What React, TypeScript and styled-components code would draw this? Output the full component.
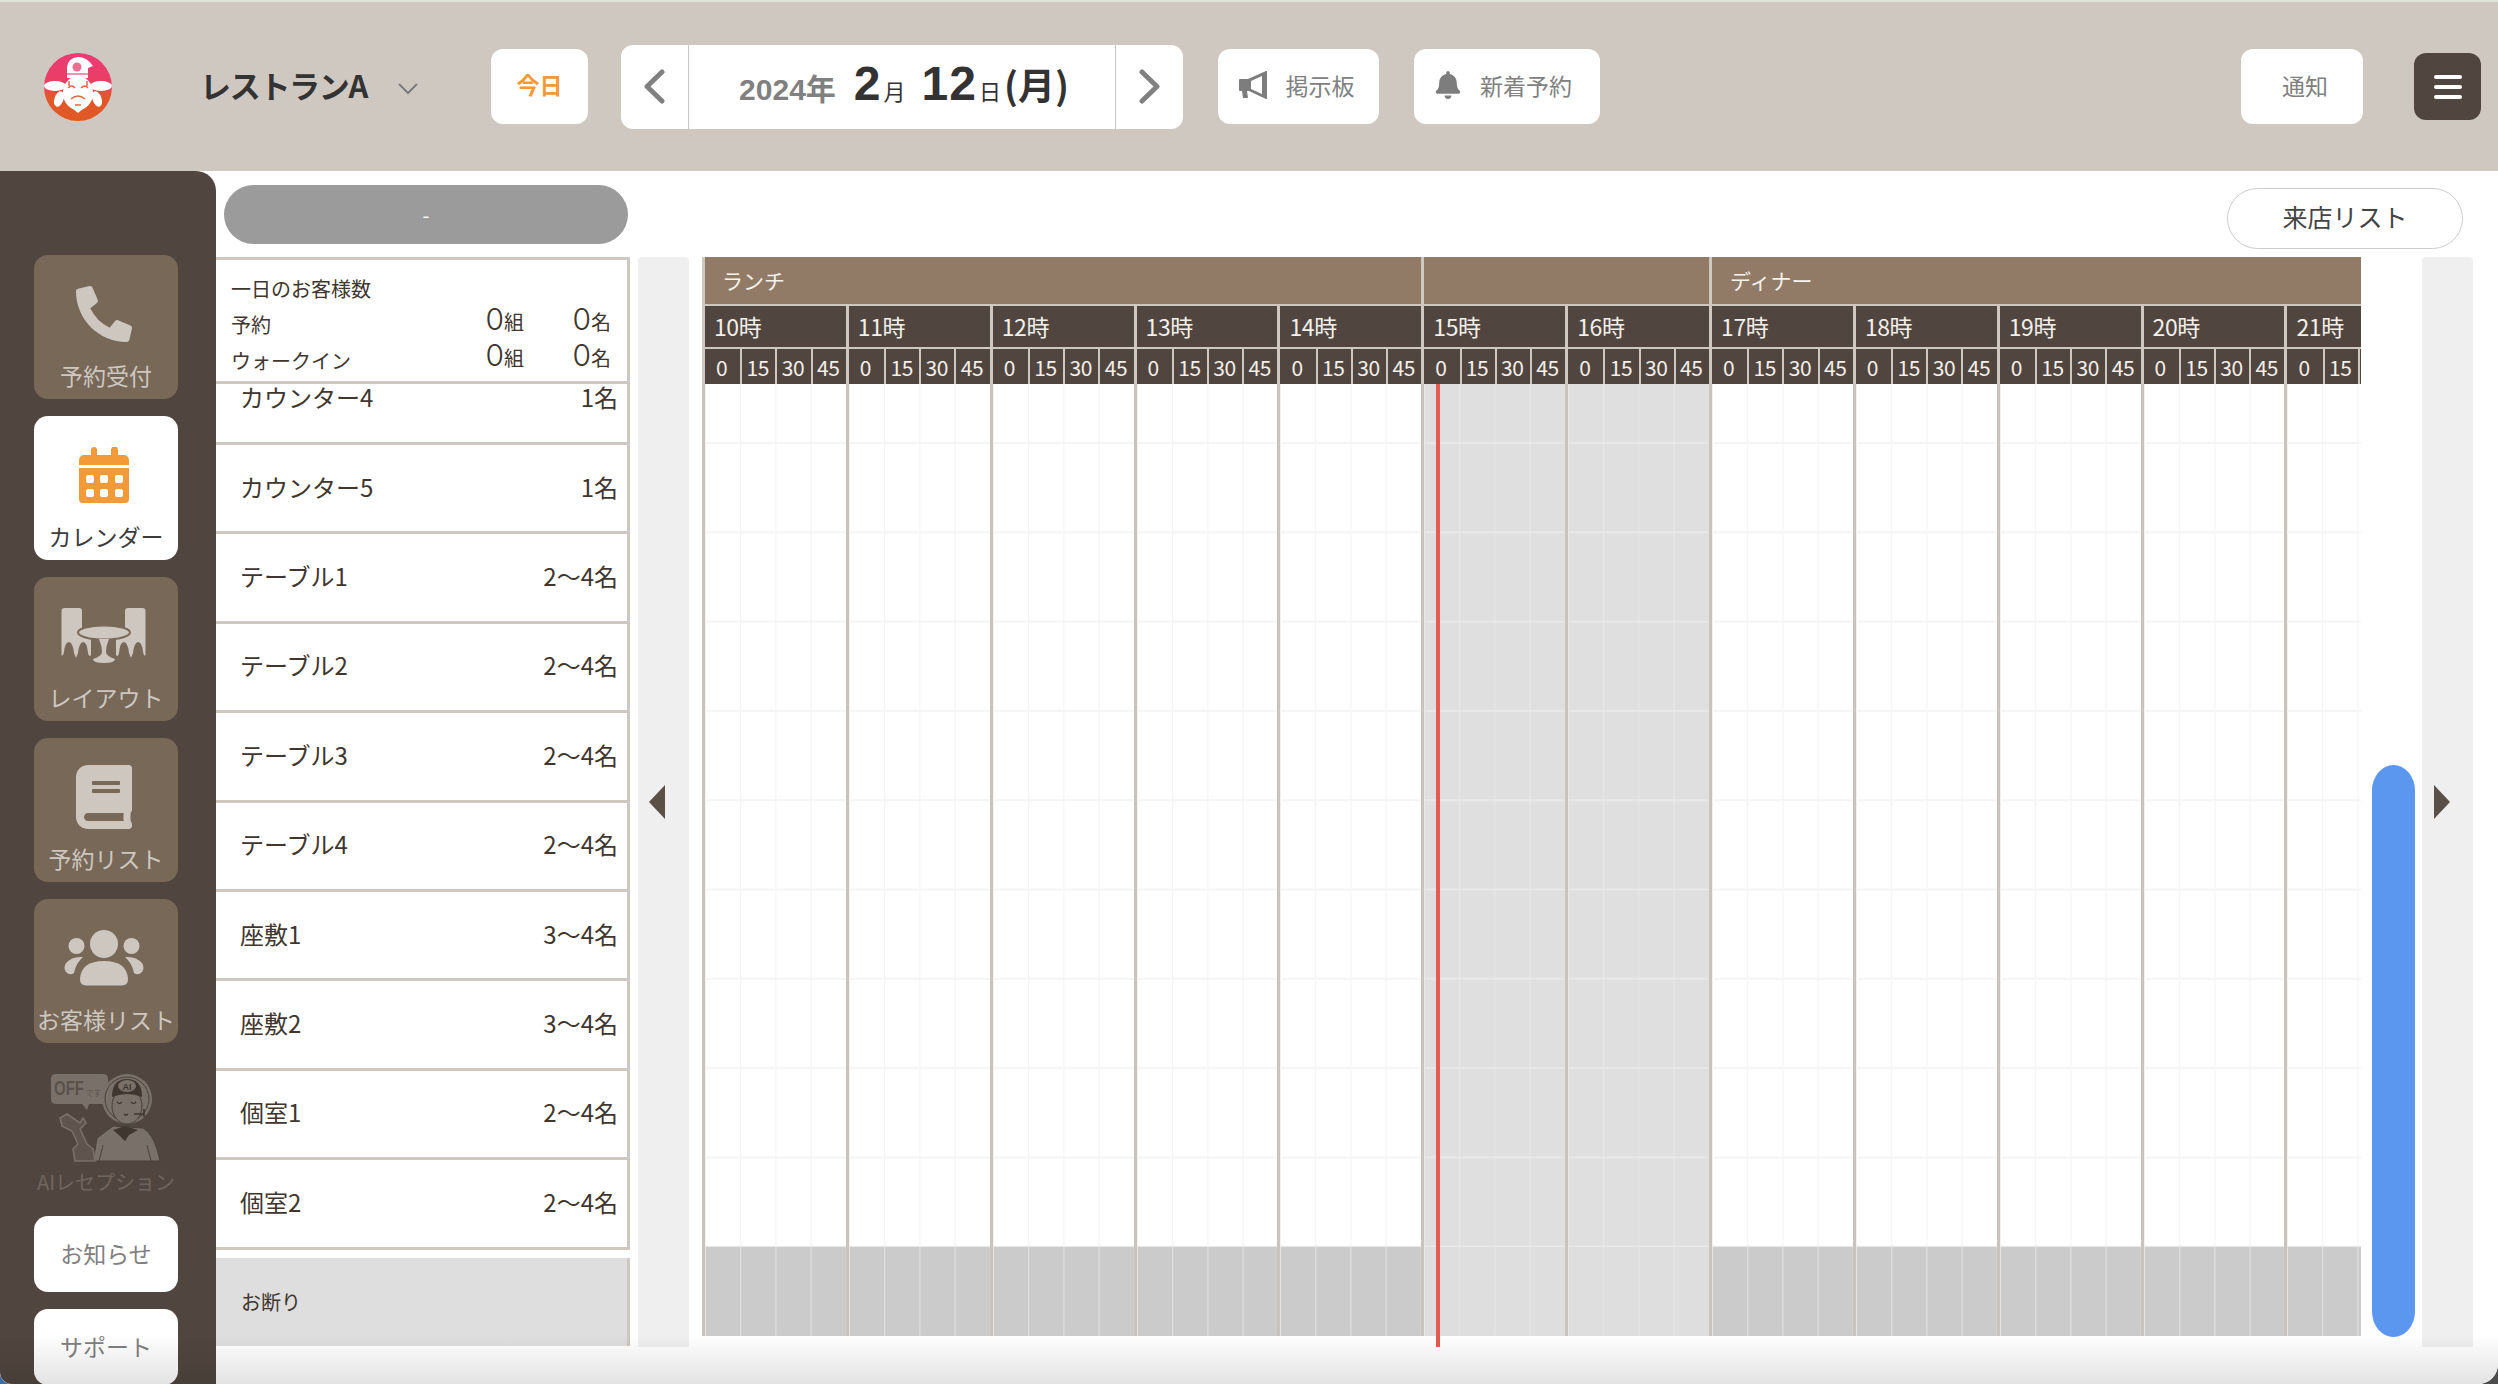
import React from 'react'
import styled, { createGlobalStyle } from 'styled-components'
import { FaPhoneAlt, FaBook, FaBell } from 'react-icons/fa'

const FONT = `'Noto Sans CJK JP', 'Noto Sans', sans-serif`
const HOUR_WIDTH = 143.86
const hours = [10, 11, 12, 13, 14, 15, 16, 17, 18, 19, 20, 21]
const quarters = [0, 15, 30, 45]
// the last hour is cut by the edge of the chart
const lastQuarters = [0, 15, null]
const seats = [
	{ name: 'カウンター5', size: '1名' },
	{ name: 'テーブル1', size: '2〜4名' },
	{ name: 'テーブル2', size: '2〜4名' },
	{ name: 'テーブル3', size: '2〜4名' },
	{ name: 'テーブル4', size: '2〜4名' },
	{ name: '座敷1', size: '3〜4名' },
	{ name: '座敷2', size: '3〜4名' },
	{ name: '個室1', size: '2〜4名' },
	{ name: '個室2', size: '2〜4名' },
]

const GlobalStyle = createGlobalStyle`
	html, body {
		margin: 0;
		padding: 0;
		width: 2498px;
		height: 1384px;
		overflow: hidden;
		background: linear-gradient(to right, #3a6ea8 50%, #4d4d4d 50%);
	}
	* {
		box-sizing: border-box;
	}
`

function Logo() {
	return (
		<LogoBox viewBox='0 0 68 68'>
			<defs>
				<linearGradient id='logoFill' x1='0' y1='0' x2='0' y2='1'>
					<stop offset='0' stopColor='#ec3a74' />
					<stop offset='0.5' stopColor='#ea3f62' />
					<stop offset='0.62' stopColor='#e2562c' />
					<stop offset='1' stopColor='#e05a24' />
				</linearGradient>
			</defs>
			<circle cx='34' cy='34' r='34' fill='url(#logoFill)' />
			<path d='M23 25 V14 Q24 5 34 4 Q43 4 49 13 L44 15 V25 Z' fill='#fff' />
			<circle cx='33' cy='14' r='4.5' fill='#ef6f93' />
			<path d='M23 21 H44' stroke='#ef6f93' strokeWidth='1.4' />
			<ellipse cx='11' cy='33' rx='11' ry='5' fill='#fff' />
			<ellipse cx='57' cy='33' rx='11' ry='5' fill='#fff' />
			<ellipse cx='15' cy='46' rx='4.5' ry='8' fill='#fff' transform='rotate(20 15 46)' />
			<ellipse cx='53' cy='46' rx='4.5' ry='8' fill='#fff' transform='rotate(-20 53 46)' />
			<ellipse cx='34' cy='40' rx='15' ry='17' fill='#fff' />
			<path d='M34 60 l-6 -5 h12 Z' fill='#fff' />
			<path
				d='M24 35 q4 -4 7 0 M37 35 q4 -4 7 0 M27 46 q7 -6 14 0 M25 28 v5 M43 28 v5 M31 52 h6'
				fill='none'
				stroke='#e2653f'
				strokeWidth='1.5'
			/>
		</LogoBox>
	)
}

function CalendarIcon() {
	return (
		<svg width='50' height='56' viewBox='0 0 50 56'>
			<path
				d='M12 8 V3 a3 3 0 0 1 6 0 V8 H32 V3 a3.5 3.5 0 0 1 7 0 V8 H45 a5 5 0 0 1 5 5 V18 H0 V13 a5 5 0 0 1 5 -5 Z'
				fill='#f29a38'
			/>
			<path
				fillRule='evenodd'
				d='M0 21 H50 V52 a4 4 0 0 1 -4 4 H4 a4 4 0 0 1 -4 -4 Z M9 28 a2 2 0 0 0 -2 2 v4 a2 2 0 0 0 2 2 h4 a2 2 0 0 0 2 -2 v-4 a2 2 0 0 0 -2 -2 Z M23 28 a2 2 0 0 0 -2 2 v4 a2 2 0 0 0 2 2 h4 a2 2 0 0 0 2 -2 v-4 a2 2 0 0 0 -2 -2 Z M38 28 a2 2 0 0 0 -2 2 v4 a2 2 0 0 0 2 2 h4 a2 2 0 0 0 2 -2 v-4 a2 2 0 0 0 -2 -2 Z M9 42 a2 2 0 0 0 -2 2 v4 a2 2 0 0 0 2 2 h4 a2 2 0 0 0 2 -2 v-4 a2 2 0 0 0 -2 -2 Z M23 42 a2 2 0 0 0 -2 2 v4 a2 2 0 0 0 2 2 h4 a2 2 0 0 0 2 -2 v-4 a2 2 0 0 0 -2 -2 Z M38 42 a2 2 0 0 0 -2 2 v4 a2 2 0 0 0 2 2 h4 a2 2 0 0 0 2 -2 v-4 a2 2 0 0 0 -2 -2 Z'
				fill='#f29a38'
			/>
		</svg>
	)
}

const CHAIR =
	'M0.5 3 Q0.5 0 3.5 0 H18 Q21 0 21 3 V23 H28 Q30 24 30 27 V47 Q28 50 27 45 Q26 34 22 34 Q18 35 17 45 L15 50 L13 45 Q12 35 8 34 Q4 34 3 44 Q2 49 0.5 47 Z'

function TableIcon() {
	return (
		<svg width='85' height='55' viewBox='0 0 85 55'>
			<path d={CHAIR} fill='#cdc7c0' />
			<path d={CHAIR} fill='#cdc7c0' transform='matrix(-1 0 0 1 85 0)' />
			<ellipse cx='43' cy='24.5' rx='26' ry='7' fill='#cdc7c0' stroke='#786858' strokeWidth='2' />
			<path
				d='M38 31 H48 Q45 38 45 44 Q45 48 54 51 Q54 55 43 55 Q32 55 32 51 Q41 48 41 44 Q41 38 38 31 Z'
				fill='#cdc7c0'
			/>
		</svg>
	)
}

function PeopleIcon() {
	return (
		<svg width='80' height='56' viewBox='0 0 80 56'>
			<circle cx='40' cy='14' r='14' fill='#cdc7c0' />
			<circle cx='12.5' cy='16' r='8' fill='#cdc7c0' />
			<circle cx='67.5' cy='16' r='8' fill='#cdc7c0' />
			<path d='M16 49 Q17 31 40 31 Q63 31 64 49 Q64 55.5 58 55.5 H22 Q16 55.5 16 49 Z' fill='#cdc7c0' />
			<path d='M19 27 Q8 26 2 33 Q-1 38 2 42 Q6 46 10 43 Q12 33 19 27 Z' fill='#cdc7c0' />
			<path d='M61 27 Q72 26 78 33 Q81 38 78 42 Q74 46 70 43 Q68 33 61 27 Z' fill='#cdc7c0' />
		</svg>
	)
}

function ReceptionArt() {
	return (
		<svg width='110' height='90' viewBox='0 0 110 90'>
			<path d='M5 1 H52 Q57 1 57 6 V26 Q57 31 52 31 H38 L36 37 L31 31 H5 Q0 31 0 26 V6 Q0 1 5 1 Z' fill='#7a706a' />
			<ArtText x='3' y='16.5' fontSize='15' fontWeight='700' fill='#5b514a' transform='scale(1 1.35)'>
				OFF
			</ArtText>
			<ArtText x='35' y='23' fontSize='7.5' fill='#5b514a'>
				です
			</ArtText>
			<path d='M46 65 L62 53 L92 55 Q104 62 109 88 H42 Z' fill='#7a706a' stroke='#4a403a' strokeWidth='1' />
			<path
				d='M9 45 L16 41 L29 50 L32 45 L35 50 L29 56 L36 71 L42 76 L44 88 L24 88 L22 76 L27 71 L21 58 L11 53 Z'
				fill='#5f554e'
				stroke='#7a706a'
				strokeWidth='1.6'
				strokeLinejoin='round'
			/>
			<circle cx='76' cy='26' r='25' fill='#7a706a' />
			<circle cx='76' cy='26' r='22' fill='#7a706a' stroke='#4a403a' strokeWidth='1' />
			<ellipse cx='76' cy='33' rx='15' ry='18' fill='#7a706a' stroke='#4a403a' strokeWidth='1' />
			<path d='M61 24 Q61 6 76 6 Q91 6 91 24 Q76 18 61 24 Z' fill='#3f3630' />
			<ellipse cx='76' cy='13' rx='9' ry='6' fill='#7a706a' />
			<ArtText x='76' y='16.5' fontSize='9' fontWeight='700' textAnchor='middle' fill='#3f3630'>
				AI
			</ArtText>
			<path d='M66 29 q2.5 3 5 0 M80 29 q2.5 3 5 0 M73 41 q2 2 4 0' fill='none' stroke='#3f3630' strokeWidth='1.2' />
			<path d='M83 41 H93 M93 36 V44' stroke='#3f3630' strokeWidth='1.6' fill='none' />
			<path d='M62 57 L74 53 L87 57 L78 62 L74 68 L68 62 Z' fill='#3f3630' />
			<path d='M52 72 L48 88 M96 72 L100 88' stroke='#4a403a' strokeWidth='1' fill='none' />
		</svg>
	)
}

function MegaphoneIcon() {
	return (
		<svg width='28' height='28' viewBox='0 0 28 28'>
			<path
				fillRule='evenodd'
				d='M0 9 Q0 8 1 8 H9 L27 0 H28 V28 H27 L10 20 H8 L9 27 H4 L3 20 H1 Q0 20 0 19 Z M12 10 V18 L23 23 V5 Z'
				fill='#7d7d7d'
			/>
		</svg>
	)
}

function Chevron({ flip }: { flip?: boolean }) {
	return (
		<svg width='21' height='35' viewBox='0 0 21 35'>
			<path
				d={flip ? 'M3 3 L18 17.5 L3 32' : 'M18 3 L3 17.5 L18 32'}
				fill='none'
				stroke='#808080'
				strokeWidth='5'
				strokeLinecap='round'
				strokeLinejoin='round'
			/>
		</svg>
	)
}

function SmallChevron() {
	return (
		<SmallChevronBox width='20' height='12' viewBox='0 0 20 12'>
			<path d='M1 1 L10 10 L19 1' fill='none' stroke='#7d7d7d' strokeWidth='2' />
		</SmallChevronBox>
	)
}

function App() {
	return (
		<Page>
			<GlobalStyle />
			<Header>
				<Logo />
				<ShopName>レストランA</ShopName>
				<SmallChevron />
				<TodayButton>今日</TodayButton>
				<DatePicker>
					<DateArrow $side='left'>
						<Chevron />
					</DateArrow>
					<DateText>
						<YearText>2024年</YearText>
						<BigNumber>2</BigNumber>
						<SmallUnit>月</SmallUnit>
						<BigNumber $gap>12</BigNumber>
						<SmallUnit>日</SmallUnit>
						<WeekText>(月)</WeekText>
					</DateText>
					<DateArrow $side='right'>
						<Chevron flip />
					</DateArrow>
				</DatePicker>
				<HeaderButton $width={161} $left={35} $gap={19} $padRight={4}>
					<MegaphoneIcon />
					<span>掲示板</span>
				</HeaderButton>
				<HeaderButton $width={186} $left={35} $gap={18} $padRight={8}>
					<FaBell size={28} color='#7d7d7d' />
					<span>新着予約</span>
				</HeaderButton>
				<HeaderSpacer />
				<HeaderButton $width={122} $left={0} $gap={0} $padLeft={6}>
					<span>通知</span>
				</HeaderButton>
				<MenuButton>
					<MenuBar />
					<MenuBar />
					<MenuBar />
				</MenuButton>
			</Header>
			<Body>
				<Sidebar>
					<NavButton>
						<NavIcon>
							<FaPhoneAlt size={56} color='#cdc7c0' />
						</NavIcon>
						<NavLabel>予約受付</NavLabel>
					</NavButton>
					<NavButton $active>
						<NavIcon>
							<CalendarIcon />
						</NavIcon>
						<NavLabel>カレンダー</NavLabel>
					</NavButton>
					<NavButton>
						<NavIcon>
							<TableIcon />
						</NavIcon>
						<NavLabel>レイアウト</NavLabel>
					</NavButton>
					<NavButton>
						<NavIcon>
							<FaBook size={64} color='#cdc7c0' />
						</NavIcon>
						<NavLabel>予約リスト</NavLabel>
					</NavButton>
					<NavButton>
						<NavIcon>
							<PeopleIcon />
						</NavIcon>
						<NavLabel>お客様リスト</NavLabel>
					</NavButton>
					<ReceptionBlock>
						<ReceptionArt />
						<ReceptionLabel>AIレセプション</ReceptionLabel>
					</ReceptionBlock>
					<SideButton>お知らせ</SideButton>
					<SideButton>サポート</SideButton>
				</Sidebar>
				<Main>
					<Toolbar>
						<GrayPill>-</GrayPill>
						<VisitButton>来店リスト</VisitButton>
					</Toolbar>
					<Board>
						<SeatList>
							<Summary>
								<SummaryTitle>一日のお客様数</SummaryTitle>
								<SummaryRow>
									<SummaryName>予約</SummaryName>
									<SummaryCount $width={66}>
										<Zero>0</Zero>組
									</SummaryCount>
									<SummaryCount $width={87}>
										<Zero>0</Zero>名
									</SummaryCount>
								</SummaryRow>
								<SummaryRow>
									<SummaryName>ウォークイン</SummaryName>
									<SummaryCount $width={66}>
										<Zero>0</Zero>組
									</SummaryCount>
									<SummaryCount $width={87}>
										<Zero>0</Zero>名
									</SummaryCount>
								</SummaryRow>
							</Summary>
							<SeatRow $clipped>
								<span>カウンター4</span>
								<span>1名</span>
							</SeatRow>
							{seats.map((seat) => (
								<SeatRow key={seat.name}>
									<span>{seat.name}</span>
									<span>{seat.size}</span>
								</SeatRow>
							))}
							<RefuseRow>お断り</RefuseRow>
						</SeatList>
						<SidePanel $pad='right'>
							<TriangleLeft />
						</SidePanel>
						<Timeline>
							<BandRow>
								<Band $hours={5}>ランチ</Band>
								<Band $hours={2} />
								<Band $hours={5}>ディナー</Band>
							</BandRow>
							<HourRow>
								{hours.map((h) => (
									<HourCell key={h}>{h}時</HourCell>
								))}
							</HourRow>
							<MinuteRow>
								{hours.map((h) => (
									<MinuteGroup key={h}>
										{(h === 21 ? lastQuarters : quarters).map((q, i) => (
											<MinuteCell key={i}>{q}</MinuteCell>
										))}
									</MinuteGroup>
								))}
							</MinuteRow>
							<GridBody>
								{hours.map((h) => (
									<HourColumn key={h}>
										<SlotArea $off={h === 15 || h === 16} />
										<RefuseArea $off={h === 15 || h === 16} />
									</HourColumn>
								))}
								<NowLine />
							</GridBody>
						</Timeline>
						<ScrollTrack>
							<ScrollThumb />
						</ScrollTrack>
						<SidePanel $pad='left'>
							<TriangleRight />
						</SidePanel>
					</Board>
				</Main>
			</Body>
			<BottomShade />
		</Page>
	)
}

const Page = styled.div`
	position: relative;
	width: 2498px;
	height: 1384px;
	overflow: hidden;
	display: flex;
	flex-direction: column;
	border-radius: 0 0 20px 12px;
	border-top: 2px solid #dfe3d8;
	background: #fff;
	font-family: ${FONT};
`
const Header = styled.header`
	flex: 0 0 169px;
	display: flex;
	align-items: center;
	padding: 0 17px 0 44px;
	background: #cfc8c1;
`
const LogoBox = styled.svg`
	width: 68px;
	height: 68px;
	flex: none;
`
const ShopName = styled.div`
	margin: 0 0 5px 88px;
	font-size: 31px;
	font-weight: 700;
	letter-spacing: -1.3px;
	color: #333;
`
const SmallChevronBox = styled.svg`
	margin: 4px 0 0 31px;
	flex: none;
`
const TodayButton = styled.button`
	margin-left: 73px;
	width: 97px;
	height: 75px;
	padding: 0 0 5px;
	border: none;
	border-radius: 12px;
	background: #fff;
	font-family: ${FONT};
	font-size: 23px;
	font-weight: 700;
	color: #f29a38;
`
const DatePicker = styled.div`
	margin-left: 33px;
	width: 562px;
	height: 84px;
	display: flex;
	border-radius: 12px;
	background: #fff;
	overflow: hidden;
`
const DateArrow = styled.div<{ $side: 'left' | 'right' }>`
	flex: 0 0 68px;
	display: flex;
	align-items: center;
	justify-content: center;
	border-${(p) => (p.$side === 'left' ? 'right' : 'left')}: 1px solid #c8c8c8;
`
const DateText = styled.div`
	flex: 1;
	display: flex;
	align-items: baseline;
	padding-left: 50px;
	line-height: 78px;
	color: #333;
	font-weight: 700;
`
const YearText = styled.span`
	font-size: 30px;
	color: #808080;
	margin-right: 18px;
	font-family: 'Liberation Sans', ${FONT};
	font-weight: 700;
`
const BigNumber = styled.span<{ $gap?: boolean }>`
	font-family: 'Liberation Sans', ${FONT};
	font-size: 48px;
	font-weight: 700;
	margin-left: ${(p) => (p.$gap ? '16px' : '0')};
	letter-spacing: 1px;
`
const SmallUnit = styled.span`
	font-size: 22px;
	font-weight: 400;
	margin-left: 2px;
`
const WeekText = styled.span`
	font-size: 37px;
	font-weight: 700;
	margin-left: 3px;
`
const HeaderButton = styled.button<{ $width: number; $left: number; $gap: number; $padLeft?: number; $padRight?: number }>`
	margin-left: ${(p) => p.$left}px;
	width: ${(p) => p.$width}px;
	height: 75px;
	flex: none;
	display: flex;
	align-items: center;
	justify-content: center;
	gap: ${(p) => p.$gap}px;
	border: none;
	border-radius: 12px;
	background: #fff;
	font-family: ${FONT};
	font-size: 23px;
	font-weight: 400;
	color: #808080;
	padding: 0 ${(p) => p.$padRight || 0}px 4px ${(p) => p.$padLeft || 0}px;
`
const HeaderSpacer = styled.div`
	flex: 1;
`
const MenuButton = styled.div`
	margin-left: 51px;
	width: 67px;
	height: 67px;
	flex: none;
	display: flex;
	flex-direction: column;
	align-items: center;
	justify-content: center;
	gap: 6px;
	border-radius: 12px;
	background: #51463f;
`
const MenuBar = styled.span`
	width: 28px;
	height: 4px;
	border-radius: 2px;
	background: #fff;
`
const Body = styled.div`
	flex: 1;
	display: flex;
	min-height: 0;
	background: #fff;
`
const Sidebar = styled.aside`
	flex: 0 0 216px;
	display: flex;
	flex-direction: column;
	align-items: flex-start;
	gap: 17px;
	padding: 84px 0 0 34px;
	overflow: hidden;
	border-radius: 0 20px 0 0;
	background: #51463f;
`
const NavButton = styled.div<{ $active?: boolean }>`
	flex: none;
	width: 144px;
	height: 144px;
	display: flex;
	flex-direction: column;
	align-items: center;
	border-radius: 14px;
	background: ${(p) => (p.$active ? '#fff' : '#786858')};
	color: ${(p) => (p.$active ? '#3c3c3c' : '#cdc7c0')};
`
const NavIcon = styled.div`
	height: 105px;
	padding: 12px 5px 0 0;
	display: flex;
	align-items: center;
	justify-content: center;
`
const NavLabel = styled.div`
	font-size: 23px;
	line-height: 30px;
	white-space: nowrap;
`
const ReceptionBlock = styled.div`
	flex: none;
	width: 144px;
	height: 139px;
	padding-top: 13px;
	display: flex;
	flex-direction: column;
	align-items: center;
`
const ArtText = styled.text`
	font-family: 'Liberation Sans', ${FONT};
`
const ReceptionLabel = styled.div`
	margin-top: 4px;
	font-size: 20px;
	line-height: 30px;
	white-space: nowrap;
	color: #70655e;
`
const SideButton = styled.div`
	flex: none;
	width: 144px;
	height: 76px;
	padding-bottom: 2px;
	display: flex;
	align-items: center;
	justify-content: center;
	border-radius: 14px;
	background: #fff;
	font-size: 23px;
	color: #808080;
`
const Main = styled.main`
	flex: 1;
	min-width: 0;
	display: flex;
	flex-direction: column;
`
const Toolbar = styled.div`
	flex: 0 0 86px;
	display: flex;
	align-items: flex-start;
	justify-content: space-between;
	padding: 14px 35px 0 8px;
`
const GrayPill = styled.div`
	width: 404px;
	height: 59px;
	display: flex;
	align-items: center;
	justify-content: center;
	border-radius: 30px;
	background: #9b9b9b;
	font-size: 20px;
	color: #fff;
`
const VisitButton = styled.div`
	width: 236px;
	height: 61px;
	margin-top: 3px;
	padding-bottom: 5px;
	display: flex;
	align-items: center;
	justify-content: center;
	border: 1px solid #ccc;
	border-radius: 31px;
	font-size: 25px;
	color: #444;
`
const Board = styled.div`
	flex: 0 0 1090px;
	display: flex;
`
const SeatList = styled.div`
	flex: 0 0 414px;
	display: flex;
	flex-direction: column;
	font-weight: 400;
	color: #40362e;
`
const Summary = styled.div`
	flex: 0 0 127px;
	padding: 15px 16px 0 15px;
	border: solid #cfc8c1;
	border-width: 3px 3px 3px 0;
`
const SummaryTitle = styled.div`
	font-size: 20px;
	line-height: 27px;
`
const SummaryRow = styled.div`
	display: flex;
	align-items: center;
	height: 36px;
	font-size: 20px;
`
const SummaryName = styled.div`
	flex: 1;
	padding-top: 8px;
`
const SummaryCount = styled.div<{ $width: number }>`
	width: ${(p) => p.$width}px;
	text-align: right;
	white-space: nowrap;
	line-height: 36px;
`
const Zero = styled.span`
	font-family: Inter, ${FONT};
	font-size: 30px;
	font-weight: 300;
`
const SeatRow = styled.div<{ $clipped?: boolean }>`
	flex: 0 0 ${(p) => (p.$clipped ? '61px' : '89.4px')};
	display: flex;
	align-items: ${(p) => (p.$clipped ? 'flex-start' : 'center')};
	justify-content: space-between;
	padding: 0 9px ${(p) => (p.$clipped ? '0' : '3px')} 24px;
	border: solid #cfc8c1;
	border-width: 0 3px 3px 0;
	font-size: 24px;
	line-height: ${(p) => (p.$clipped ? '26px' : '30px')};
`
const RefuseRow = styled.div`
	flex: 0 0 88px;
	margin-top: 8px;
	display: flex;
	align-items: center;
	padding-left: 25px;
	border-right: 3px solid #cfc8c1;
	background: #dedede;
	font-size: 20px;
	font-weight: 400;
`
const SidePanel = styled.div<{ $pad: 'left' | 'right' }>`
	flex: 0 0 51px;
	margin-left: ${(p) => (p.$pad === 'right' ? '8px' : '7px')};
	display: flex;
	align-items: center;
	justify-content: center;
	padding-${(p) => p.$pad}: ${(p) => (p.$pad === 'right' ? '14px' : '8px')};
	border-radius: 4px 4px 0 0;
	background: #efefef;
`
const TriangleLeft = styled.div`
	width: 0;
	height: 0;
	border-style: solid;
	border-width: 17px 16px 17px 0;
	border-color: transparent #5a5048 transparent transparent;
`
const TriangleRight = styled.div`
	width: 0;
	height: 0;
	margin-left: -20px;
	border-style: solid;
	border-width: 17px 0 17px 16px;
	border-color: transparent transparent transparent #5a5048;
`
const Timeline = styled.div`
	flex: 0 0 1659px;
	margin-left: 13px;
	display: flex;
	flex-direction: column;
	overflow: hidden;
`
const BandRow = styled.div`
	flex: 0 0 49px;
	display: flex;
	border-bottom: 2px solid #cfc8c1;
`
const Band = styled.div<{ $hours: number }>`
	flex: none;
	width: ${(p) => p.$hours * HOUR_WIDTH}px;
	padding: 0 0 2px 18px;
	display: flex;
	align-items: center;
	border-left: 3px solid #cfc8c1;
	background: #917b66;
	font-size: 21px;
	color: #f5f1ec;
	&:first-child {
		padding-left: 17px;
	}
`
const HourRow = styled.div`
	flex: 0 0 43px;
	display: flex;
	border-bottom: 2px solid #cfc8c1;
`
const HourCell = styled.div`
	flex: 0 0 ${HOUR_WIDTH}px;
	padding: 0 0 2px 9px;
	display: flex;
	align-items: center;
	border-left: 3px solid #cfc8c1;
	background: #51463f;
	font-size: 23px;
	letter-spacing: -0.4px;
	color: #f3efea;
`
const MinuteRow = styled.div`
	flex: 0 0 35px;
	display: flex;
`
const MinuteGroup = styled.div`
	flex: 0 0 ${HOUR_WIDTH}px;
	display: flex;
	border-left: 3px solid #cfc8c1;
`
const MinuteCell = styled.div`
	flex: 0 0 25%;
	min-width: 0;
	padding-right: 2px;
	display: flex;
	align-items: center;
	justify-content: center;
	background: #51463f;
	border-left: 2px solid #cfc8c1;
	font-size: 21px;
	letter-spacing: -0.4px;
	color: #f3efea;
	&:first-child {
		border-left: none;
	}
`
const GridBody = styled.div`
	position: relative;
	flex: 1;
	display: flex;
	align-items: flex-start;
	background: #fff;
`
const HourColumn = styled.div`
	flex: 0 0 ${HOUR_WIDTH}px;
	display: flex;
	flex-direction: column;
	border-left: 3px solid #c9c3ba;
`
const SlotArea = styled.div<{ $off: boolean }>`
	height: 862px;
	background-color: ${(p) => (p.$off ? '#dfdfdf' : '#fff')};
	background-image: linear-gradient(
			to bottom,
			${(p) => (p.$off ? '#e8e8e8' : '#f5f5f5')} 2px,
			transparent 2px
		),
		linear-gradient(
			to right,
			transparent calc(100% - 1px),
			${(p) => (p.$off ? '#e8e8e8' : '#f1f1f1')} calc(100% - 1px)
		);
	background-size: 100% 89.3px, 35.2px 100%;
	background-position: 0 58px, 1px 0;
`
const RefuseArea = styled.div<{ $off: boolean }>`
	height: 90px;
	background-color: ${(p) => (p.$off ? '#dedede' : '#cbcbcb')};
	background-image: linear-gradient(
		to right,
		transparent calc(100% - 1px),
		${(p) => (p.$off ? '#e8e8e8' : '#e4e4e4')} calc(100% - 1px)
	);
	background-size: 35.2px 100%;
	background-position: 1px 0;
	border-top: 1px solid #e9e9e9;
`
const NowLine = styled.div`
	position: absolute;
	top: 0;
	bottom: 0;
	left: 734px;
	width: 4px;
	background: #e55b50;
`
const ScrollTrack = styled.div`
	flex: 0 0 43px;
	margin-left: 11px;
	display: flex;
	flex-direction: column;
	justify-content: flex-end;
	padding-bottom: 10px;
`
const ScrollThumb = styled.div`
	height: 572px;
	border-radius: 22px / 26px;
	background: #5b97ee;
`
const BottomShade = styled.div`
	position: absolute;
	left: 0;
	right: 0;
	bottom: 0;
	height: 50px;
	pointer-events: none;
	background: linear-gradient(to bottom, rgba(0, 0, 0, 0), rgba(0, 0, 0, 0.11));
`

export default App
